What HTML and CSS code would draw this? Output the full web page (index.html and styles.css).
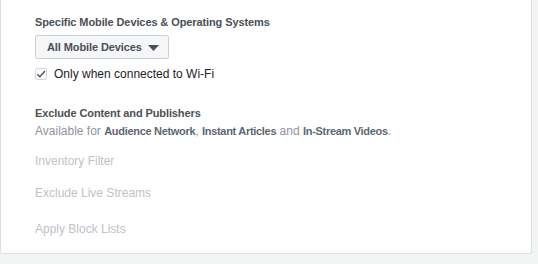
FILE: index.html
```html
<!DOCTYPE html>
<html lang="en">
<head>
  <meta charset="UTF-8" />
  <title>Placements</title>
  <link rel="stylesheet" href="styles.css">
</head>
<body>
  <div class="card">
    <div class="field">
      <h4 class="field-title">Specific Mobile Devices &amp; Operating Systems</h4>
      <button class="select-btn" type="button">
        All Mobile Devices
        <svg class="caret" width="11" height="6" viewBox="0 0 11 6"><path d="M0 0h11L5.5 6z" fill="#4b4f56"/></svg>
      </button>
      <label class="check-row">
        <span class="checkbox">
          <svg width="12" height="12" viewBox="0 0 12 12"><path d="M1.6 6.2l3 3L10.8 2.4" fill="none" stroke="#4b4f56" stroke-width="1.6"/></svg>
        </span>
        Only when connected to Wi-Fi
      </label>
    </div>

    <div class="field exclude">
      <h4 class="field-title">Exclude Content and Publishers</h4>
      <p class="note">Available for <b>Audience Network</b>, <b>Instant Articles</b> and <b>In-Stream Videos</b>.</p>
      <ul class="disabled-list">
        <li>Inventory Filter</li>
        <li>Exclude Live Streams</li>
        <li>Apply Block Lists</li>
      </ul>
    </div>
  </div>
</body>
</html>
```

FILE: styles.css
```css
* {
  margin: 0;
  padding: 0;
  box-sizing: border-box;
}

body {
  font-family: 'Liberation Sans', Arial, sans-serif;
  font-size: 12px;
  color: #4b4f56;
  background-color: #f2f3f3;
}

.card {
  width: 532px;
  height: 254px;
  background-color: #fff;
  border: 1px solid #dddfe2;
  border-top: none;
  border-radius: 0 0 3px 3px;
  padding: 15px 34px 0;
}

.field-title {
  font-size: 11px;
  font-weight: bold;
  letter-spacing: -0.1px;
  line-height: 14px;
  color: #4b4f56;
}

.select-btn {
  display: flex;
  align-items: center;
  gap: 6px;
  margin-top: 6px;
  height: 24px;
  padding: 0 9px 0 11px;
  font-family: inherit;
  font-size: 11px;
  font-weight: bold;
  letter-spacing: -0.1px;
  color: #4b4f56;
  background-color: #f5f6f7;
  border: 1px solid #ced0d4;
  border-radius: 2px;
}

.caret {
  margin-top: 1px;
}

.check-row {
  display: flex;
  align-items: center;
  gap: 7px;
  margin-top: 8px;
  line-height: 14px;
  color: #1d2129;
}

.checkbox {
  display: flex;
  align-items: center;
  justify-content: center;
  width: 12px;
  height: 12px;
  border: 1px solid #d3d6db;
  border-radius: 2px;
}

.exclude {
  margin-top: 25px;
}

.note {
  margin-top: 4px;
  line-height: 14px;
  color: #90949c;
}

.note b {
  font-size: 11px;
  letter-spacing: -0.3px;
  color: #606770;
}

.disabled-list {
  list-style: none;
  color: #bec2c9;
  line-height: 14px;
}

.disabled-list li {
  margin-top: 16px;
}

.disabled-list li:nth-child(2) {
  margin-top: 18px;
}

.disabled-list li:nth-child(3) {
  margin-top: 22px;
}
```
